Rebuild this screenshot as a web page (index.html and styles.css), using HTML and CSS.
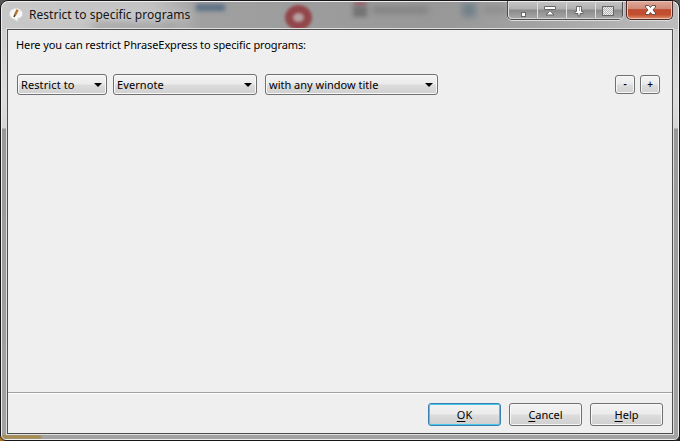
FILE: index.html
```
<!DOCTYPE html>
<html lang="en">
<head>
<meta charset="utf-8">
<title>Restrict to specific programs</title>
<link rel="stylesheet" href="styles.css">
</head>
<body>
<div class="window">
  <div class="glass" aria-hidden="true">
    <i class="blur blue-a"></i><i class="blur shade-a"></i><i class="blur ring"></i>
    <i class="blur red-tab"></i><i class="blur gray-tab"></i><i class="blur words"></i>
    <i class="blur blue-b"></i><i class="blur words-b"></i><i class="blur gold"></i>
  </div>
  <header class="titlebar">
    <svg class="app-icon" width="14" height="14" viewBox="0 0 14 14">
      <path d="M7 .5C3.200.5.500 2.800.500 6c0 2.400 1.600 4.200 4 5l4.500 2.500-.4-2.800c2.800-.6 4.900-2.300 4.900-4.700C13.500 2.800 10.800.5 7 .5z" fill="#f8f8f8" stroke="#d8d8d8" stroke-width=".7"/>
      <path d="M8.600 1.700 6 7" stroke="#b5722c" stroke-width="2.400"/>
      <path d="M6 6.700 5 9" stroke="#583820" stroke-width="1.600"/>
    </svg>
    <h1 class="title">Restrict to specific programs</h1>
    <div class="controls">
      <div class="tools">
        <span class="tool"><svg width="28" height="19" viewBox="0 0 28 19"><rect x="13.500" y="11.500" width="4" height="4" fill="#fff" stroke="#666"/></svg></span>
        <span class="tool"><svg width="28" height="19" viewBox="0 0 28 19"><path d="M7.500 5.500h11v3h-11zM13 9.500l4 4.500H9z" fill="#fff" stroke="#666"/></svg></span>
        <span class="tool"><svg width="28" height="19" viewBox="0 0 28 19"><path d="M10.500 5.500h5v5h1.500v2h-3v2.500h-2v-2.500H9v-2h1.500z" fill="#fff" stroke="#666"/><path d="M13.500 6v4" stroke="#aaa"/></svg></span>
        <span class="tool"><svg width="28" height="19" viewBox="0 0 28 19"><defs><pattern id="check" width="2" height="2" patternUnits="userSpaceOnUse"><rect width="2" height="2" fill="#eee"/><path d="M0 0h1v1H0zM1 1h1v1H1z" fill="#b5b5b5"/></pattern></defs><rect x="7.500" y="5.500" width="11" height="9" fill="url(#check)" stroke="#666"/></svg></span>
      </div>
      <div class="close"><svg width="45" height="19" viewBox="0 0 45 19"><path d="M18.500 5.500h3.300l1.700 2 1.700-2h3.300V7L26 10l2.500 3v1.500h-3.300l-1.700-2-1.700 2h-3.300V13L21 10l-2.500-3z" fill="#fff" stroke="#65504d"/></svg></div>
    </div>
  </header>
  <main class="client">
    <section class="content">
      <p class="intro">Here you can restrict PhraseExpress to specific programs:</p>
      <div class="rule">
        <div class="combo mode"><span class="t-mode">Restrict to</span><i class="arrow"></i></div>
        <div class="combo program"><span class="t-program">Evernote</span><i class="arrow"></i></div>
        <div class="combo match"><span>with any window title</span><i class="arrow"></i></div>
        <div class="pair"><button class="mini">-</button><button class="mini">+</button></div>
      </div>
    </section>
    <footer class="footer">
      <button class="btn default"><u>O</u>K</button>
      <button class="btn"><u>C</u>ancel</button>
      <button class="btn"><u>H</u>elp</button>
    </footer>
  </main>
</div>
</body>
</html>
```
FILE: styles.css
```
* { box-sizing: border-box; }
html, body { margin: 0; height: 100%; }
body {
  background:
    linear-gradient(90deg, #b27416 0, #6d4c18 20px, #222 60px) 0 100% / 100% 8px no-repeat,
    #555;
  font-family: "Noto Sans", sans-serif;
  font-size: 11px;
  color: #000;
  overflow: hidden;
}
.window {
  position: relative;
  width: 680px;
  height: 441px;
  border: 1px solid #17141a;
  border-radius: 8px 8px 6px 6px;
  background: #eee;
  padding: 0 6px 6px;
  overflow: hidden;
}
.glass {
  position: absolute;
  inset: 1px;
  border-radius: 6px 6px 4px 4px;
  overflow: hidden;
  background:
    linear-gradient(90deg, #c8c8c8 0, #c2c2c2 150px, #a0a0a0 200px, #989898 440px, #a2a2a2 530px, #bcbcbc 665px) 0 0 / 100% 27px no-repeat,
    linear-gradient(#c8c8c8 0, #ddd 95px, #d5d5d5 126px, #999 127px, #a2a2a2 100%);
}
.blur { position: absolute; filter: blur(2px); }
.blue-a { left: 194px; top: 2px; width: 29px; height: 7px; background: #5d7187; }
.shade-a { left: 90px; top: 21px; width: 84px; height: 6px; background: #999; filter: blur(4px); }
.ring { left: 283px; top: 3px; width: 27px; height: 25px; border: 8px solid #92464a; border-radius: 50%; background: #b5a0a0; filter: blur(1.5px); }
.red-tab { left: 352px; top: 0; width: 12px; height: 4px; background: #9c5360; }
.gray-tab { left: 351px; top: 4px; width: 14px; height: 11px; background: #747474; }
.words { left: 370px; top: 5px; width: 56px; height: 6px; background: #7f7f7f; filter: blur(3px); }
.blue-b { left: 460px; top: 1px; width: 14px; height: 14px; background: #71818a; filter: blur(3px); }
.words-b { left: 482px; top: 5px; width: 22px; height: 6px; background: #8a8a8a; filter: blur(3px); }
.gold { left: 0; bottom: 0; width: 39px; height: 4px; background: #a68a4d; filter: blur(1px); }
.titlebar { position: relative; display: flex; align-items: flex-start; height: 27px; padding-left: 2px; }
.app-icon { margin-top: 7px; }
.title {
  margin: 4px 0 0 6px;
  font-size: 12px;
  font-weight: 400;
  line-height: 20px;
  letter-spacing: .03px;
  color: #151515;
  white-space: nowrap;
  text-shadow: 0 0 6px #ddd;
}
.controls { display: flex; gap: 3px; margin-left: auto; }
.tools {
  display: flex;
  width: 116px;
  height: 19px;
  border: 1px solid #4c4c4c;
  border-top: 0;
  border-radius: 0 0 5px 5px;
  background: linear-gradient(#c6c6c6 0, #b0b0b0 45%, #8a8a8a 50%, #a9a9a9 100%);
  box-shadow: 0 1px 0 #ddd;
}
.tool { flex: 1; border: 1px solid #d5d5d5; border-top-color: #eee; border-right-color: transparent; border-left-color: #ddd; }
.tool:first-child { border-bottom-left-radius: 4px; }
.tool:last-child { border-right-color: #ccc; border-bottom-right-radius: 4px; }
.tool svg { display: block; margin: -1px 0 0 -1px; }
.close {
  width: 47px;
  height: 19px;
  border: 1px solid #502a27;
  border-top: 0;
  border-radius: 0 0 5px 5px;
  background: linear-gradient(#dfa99b 0, #d08a77 43%, #c04c30 48%, #c2502f 75%, #e08f6c 100%);
  box-shadow: inset 0 0 0 1px #ecc2b6, 0 1px 0 #ddd;
}
.close svg { display: block; margin-top: -1px; }
.client {
  position: relative;
  display: flex;
  flex-direction: column;
  width: 666px;
  height: 405px;
  border: 1px solid #4d4d4d;
  background: #efefef;
  box-shadow: 0 0 0 1px #dedede;
  margin-top: 1px;
}
.content { flex: 1; padding: 6px 12px 0 9px; }
.intro { margin: 0 0 0 -1px; line-height: 18px; width: max-content; letter-spacing: -.11px; }
.rule { display: flex; align-items: center; height: 21px; margin-top: 20px; }
.combo, .btn, .mini {
  border: 1px solid #707070;
  border-radius: 3px;
  background: linear-gradient(#f3f3f3 0, #ebebeb 49%, #ddd 51%, #cfcfcf 100%);
  box-shadow: inset 0 0 0 1px #f8f8f8;
}
.combo {
  display: flex;
  align-items: center;
  justify-content: space-between;
  height: 21px;
  padding: 0 4px 0 3px;
  line-height: 18px;
  white-space: nowrap;
}
.mode { width: 90px; }
.program { width: 144px; margin-left: 6px; }
.match { width: 173px; margin-left: 8px; }
.t-mode, .t-program { letter-spacing: .1px; }
.arrow { border: 4px solid transparent; border-top-color: #000; border-bottom: 0; }
.pair { display: flex; gap: 5px; margin-left: auto; }
.mini { width: 20px; height: 19px; padding: 0; font: 600 10px/15px "Noto Sans", sans-serif; color: #000; }
.footer {
  display: flex;
  gap: 8px;
  height: 41px;
  padding: 10px 9px 0 0;
  justify-content: flex-end;
  border-top: 1px solid #a0a0a0;
  box-shadow: inset 0 1px 0 #fff;
}
.btn { width: 73px; height: 23px; padding: 0; font: 11px/20px "Noto Sans", sans-serif; color: #000; }
.default { border-color: #3c7fb1; box-shadow: inset 0 0 0 1px #46c8ee; }
.btn u { text-underline-offset: 2px; text-decoration-thickness: 1px; }
```
